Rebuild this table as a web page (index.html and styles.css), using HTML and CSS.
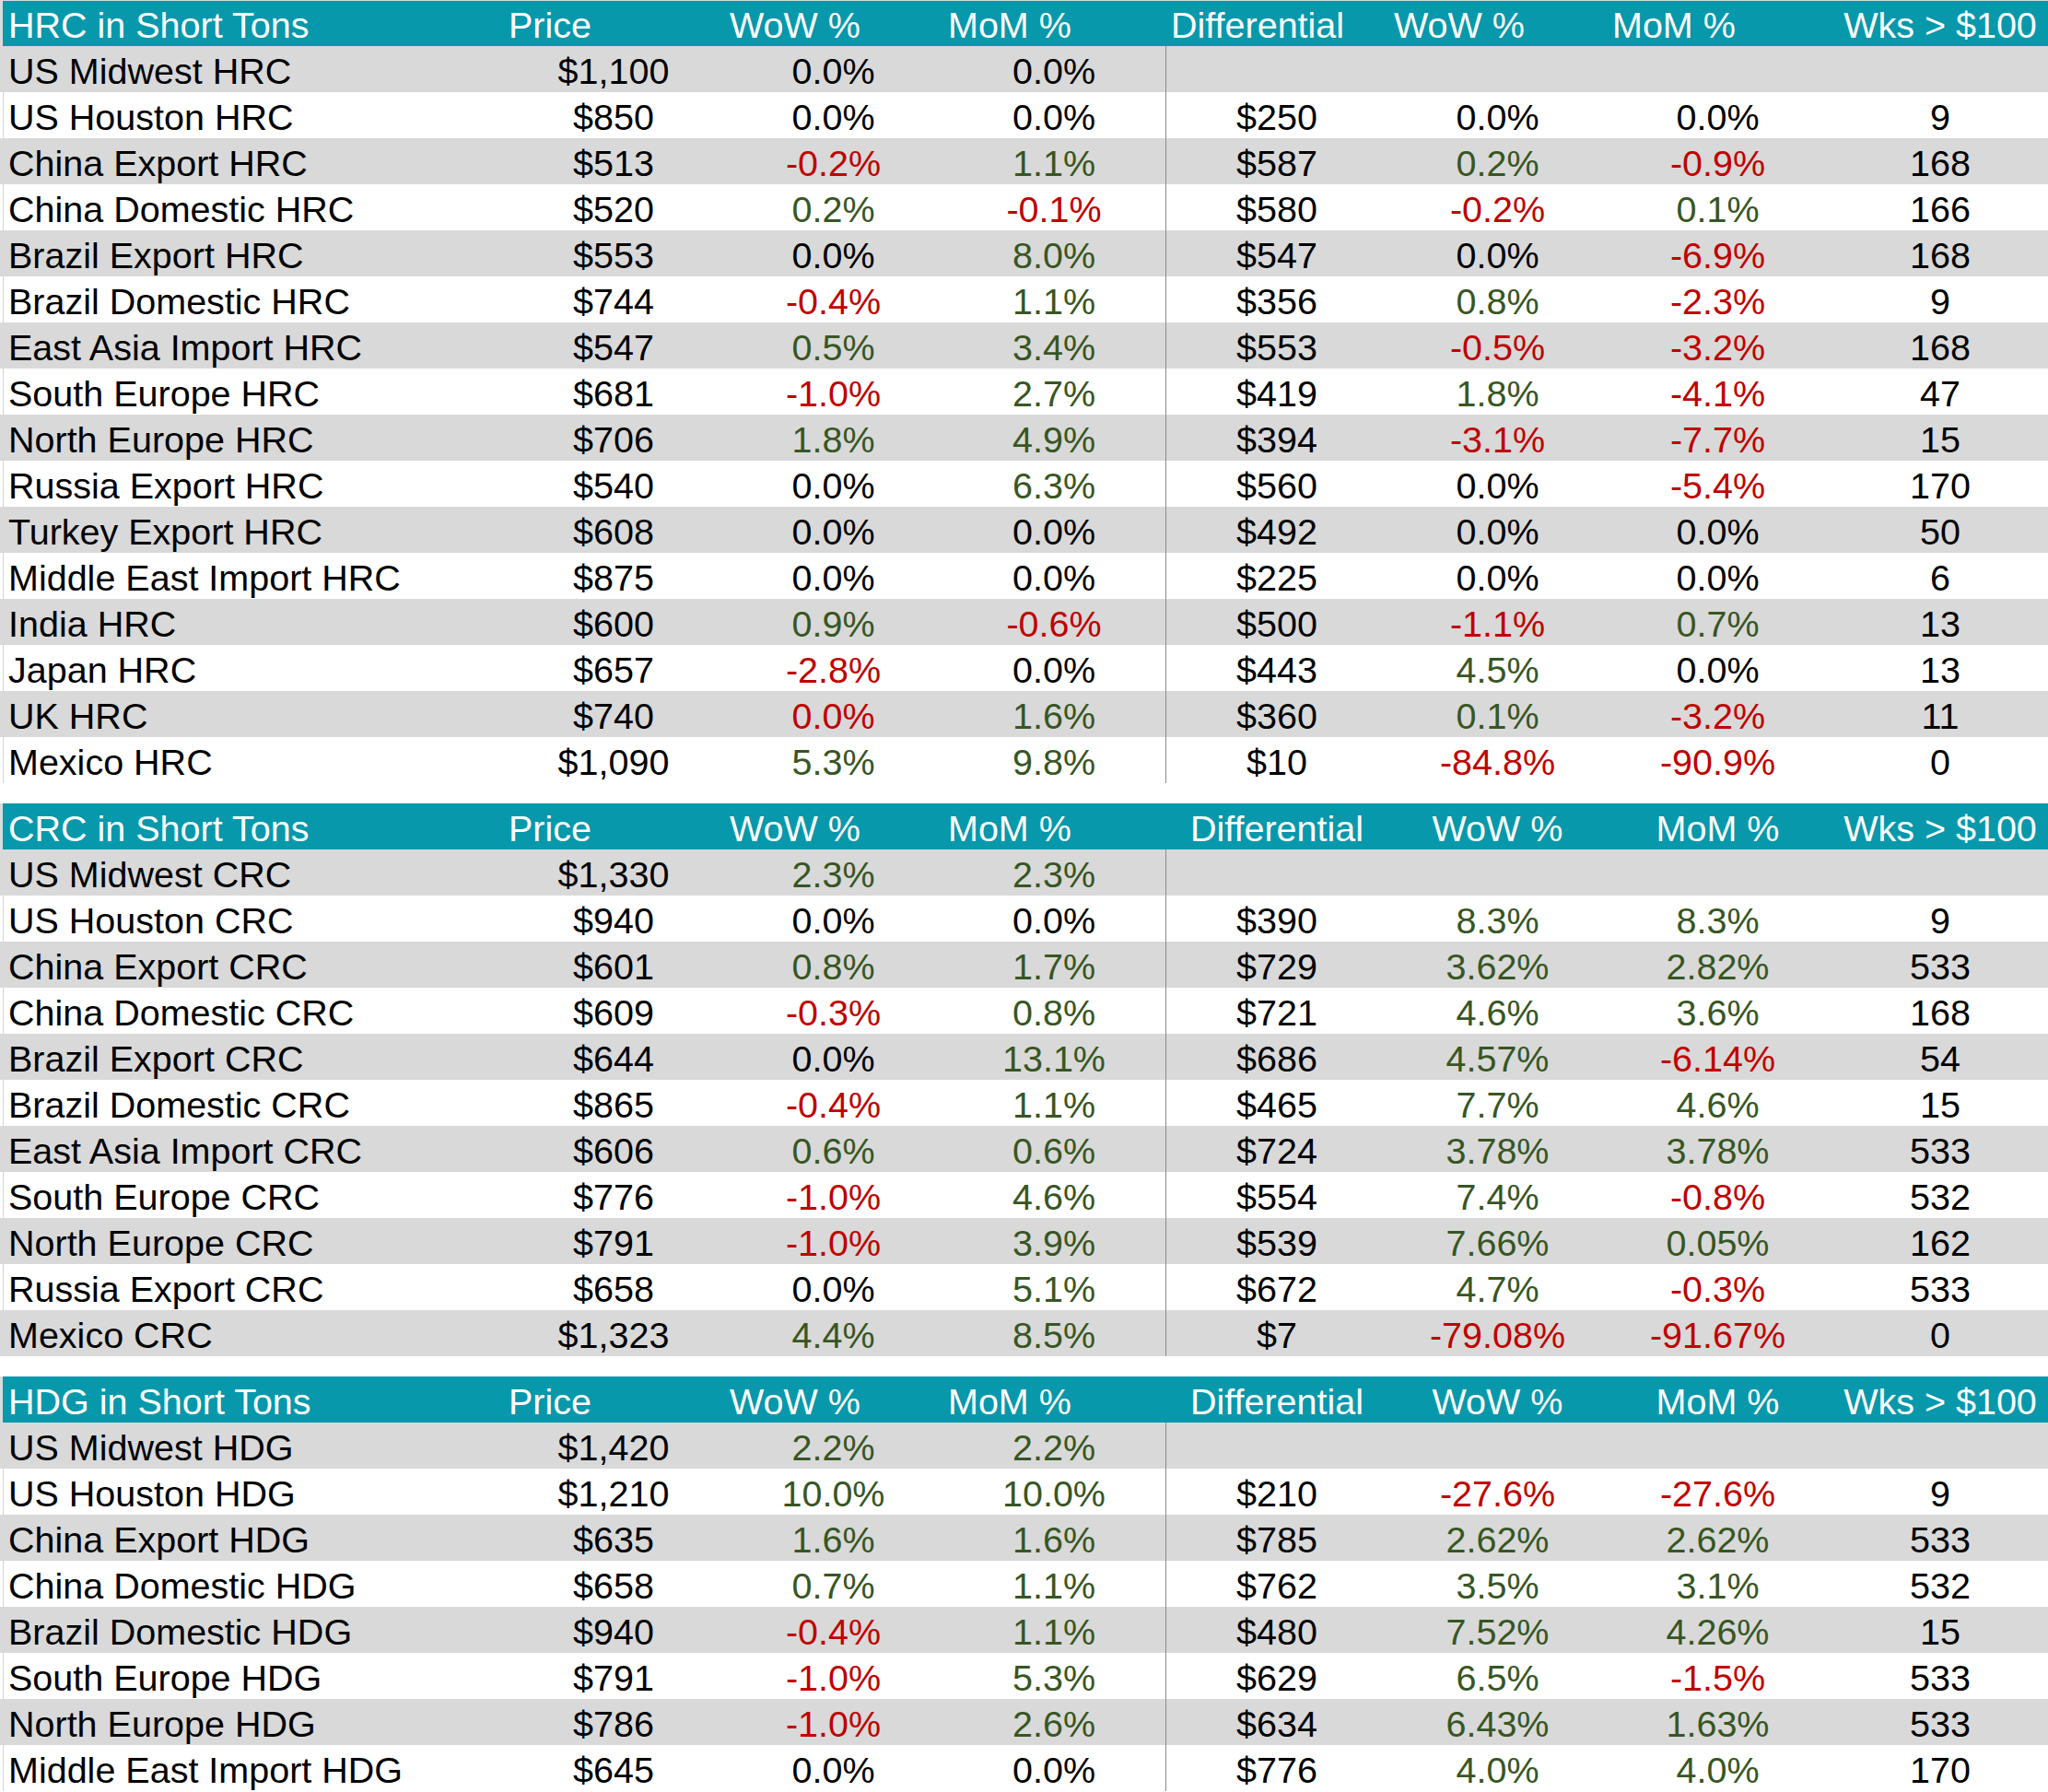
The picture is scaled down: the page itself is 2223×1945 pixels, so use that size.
FILE: index.html
```html
<!DOCTYPE html>
<html lang="en">
<head>
<meta charset="utf-8">
<title>Steel Prices in Short Tons</title>
<link rel="stylesheet" href="styles.css">
</head>
<body>
<div class="sheet">

  <section class="block first">
    <div class="row head">
      <div class="cell name">HRC in Short Tons</div>
      <div class="cell hl">Price</div>
      <div class="cell hl">WoW %</div>
      <div class="cell hl">MoM %</div>
      <div class="cell hl">Differential</div>
      <div class="cell hl">WoW %</div>
      <div class="cell hl">MoM %</div>
      <div class="cell wk">Wks &gt; $100</div>
    </div>
    <div class="row"><div class="cell name">US Midwest HRC</div><div class="cell">$1,100</div><div class="cell">0.0%</div><div class="cell">0.0%</div><div class="cell div"></div><div class="cell"></div><div class="cell"></div><div class="cell wk"></div></div>
    <div class="row"><div class="cell name">US Houston HRC</div><div class="cell">$850</div><div class="cell">0.0%</div><div class="cell">0.0%</div><div class="cell div">$250</div><div class="cell">0.0%</div><div class="cell">0.0%</div><div class="cell wk">9</div></div>
    <div class="row"><div class="cell name">China Export HRC</div><div class="cell">$513</div><div class="cell r">-0.2%</div><div class="cell g">1.1%</div><div class="cell div">$587</div><div class="cell g">0.2%</div><div class="cell r">-0.9%</div><div class="cell wk">168</div></div>
    <div class="row"><div class="cell name">China Domestic HRC</div><div class="cell">$520</div><div class="cell g">0.2%</div><div class="cell r">-0.1%</div><div class="cell div">$580</div><div class="cell r">-0.2%</div><div class="cell g">0.1%</div><div class="cell wk">166</div></div>
    <div class="row"><div class="cell name">Brazil Export HRC</div><div class="cell">$553</div><div class="cell">0.0%</div><div class="cell g">8.0%</div><div class="cell div">$547</div><div class="cell">0.0%</div><div class="cell r">-6.9%</div><div class="cell wk">168</div></div>
    <div class="row"><div class="cell name">Brazil Domestic HRC</div><div class="cell">$744</div><div class="cell r">-0.4%</div><div class="cell g">1.1%</div><div class="cell div">$356</div><div class="cell g">0.8%</div><div class="cell r">-2.3%</div><div class="cell wk">9</div></div>
    <div class="row"><div class="cell name">East Asia Import HRC</div><div class="cell">$547</div><div class="cell g">0.5%</div><div class="cell g">3.4%</div><div class="cell div">$553</div><div class="cell r">-0.5%</div><div class="cell r">-3.2%</div><div class="cell wk">168</div></div>
    <div class="row"><div class="cell name">South Europe HRC</div><div class="cell">$681</div><div class="cell r">-1.0%</div><div class="cell g">2.7%</div><div class="cell div">$419</div><div class="cell g">1.8%</div><div class="cell r">-4.1%</div><div class="cell wk">47</div></div>
    <div class="row"><div class="cell name">North Europe HRC</div><div class="cell">$706</div><div class="cell g">1.8%</div><div class="cell g">4.9%</div><div class="cell div">$394</div><div class="cell r">-3.1%</div><div class="cell r">-7.7%</div><div class="cell wk">15</div></div>
    <div class="row"><div class="cell name">Russia Export HRC</div><div class="cell">$540</div><div class="cell">0.0%</div><div class="cell g">6.3%</div><div class="cell div">$560</div><div class="cell">0.0%</div><div class="cell r">-5.4%</div><div class="cell wk">170</div></div>
    <div class="row"><div class="cell name">Turkey Export HRC</div><div class="cell">$608</div><div class="cell">0.0%</div><div class="cell">0.0%</div><div class="cell div">$492</div><div class="cell">0.0%</div><div class="cell">0.0%</div><div class="cell wk">50</div></div>
    <div class="row"><div class="cell name">Middle East Import HRC</div><div class="cell">$875</div><div class="cell">0.0%</div><div class="cell">0.0%</div><div class="cell div">$225</div><div class="cell">0.0%</div><div class="cell">0.0%</div><div class="cell wk">6</div></div>
    <div class="row"><div class="cell name">India HRC</div><div class="cell">$600</div><div class="cell g">0.9%</div><div class="cell r">-0.6%</div><div class="cell div">$500</div><div class="cell r">-1.1%</div><div class="cell g">0.7%</div><div class="cell wk">13</div></div>
    <div class="row"><div class="cell name">Japan HRC</div><div class="cell">$657</div><div class="cell r">-2.8%</div><div class="cell">0.0%</div><div class="cell div">$443</div><div class="cell g">4.5%</div><div class="cell">0.0%</div><div class="cell wk">13</div></div>
    <div class="row"><div class="cell name">UK HRC</div><div class="cell">$740</div><div class="cell r">0.0%</div><div class="cell g">1.6%</div><div class="cell div">$360</div><div class="cell g">0.1%</div><div class="cell r">-3.2%</div><div class="cell wk">11</div></div>
    <div class="row"><div class="cell name">Mexico HRC</div><div class="cell">$1,090</div><div class="cell g">5.3%</div><div class="cell g">9.8%</div><div class="cell div">$10</div><div class="cell r">-84.8%</div><div class="cell r">-90.9%</div><div class="cell wk">0</div></div>
  </section>

  <section class="block">
    <div class="row head">
      <div class="cell name">CRC in Short Tons</div>
      <div class="cell hl">Price</div>
      <div class="cell hl">WoW %</div>
      <div class="cell hl">MoM %</div>
      <div class="cell">Differential</div>
      <div class="cell">WoW %</div>
      <div class="cell">MoM %</div>
      <div class="cell wk">Wks &gt; $100</div>
    </div>
    <div class="row"><div class="cell name">US Midwest CRC</div><div class="cell">$1,330</div><div class="cell g">2.3%</div><div class="cell g">2.3%</div><div class="cell div"></div><div class="cell"></div><div class="cell"></div><div class="cell wk"></div></div>
    <div class="row"><div class="cell name">US Houston CRC</div><div class="cell">$940</div><div class="cell">0.0%</div><div class="cell">0.0%</div><div class="cell div">$390</div><div class="cell g">8.3%</div><div class="cell g">8.3%</div><div class="cell wk">9</div></div>
    <div class="row"><div class="cell name">China Export CRC</div><div class="cell">$601</div><div class="cell g">0.8%</div><div class="cell g">1.7%</div><div class="cell div">$729</div><div class="cell g">3.62%</div><div class="cell g">2.82%</div><div class="cell wk">533</div></div>
    <div class="row"><div class="cell name">China Domestic CRC</div><div class="cell">$609</div><div class="cell r">-0.3%</div><div class="cell g">0.8%</div><div class="cell div">$721</div><div class="cell g">4.6%</div><div class="cell g">3.6%</div><div class="cell wk">168</div></div>
    <div class="row"><div class="cell name">Brazil Export CRC</div><div class="cell">$644</div><div class="cell">0.0%</div><div class="cell g">13.1%</div><div class="cell div">$686</div><div class="cell g">4.57%</div><div class="cell r">-6.14%</div><div class="cell wk">54</div></div>
    <div class="row"><div class="cell name">Brazil Domestic CRC</div><div class="cell">$865</div><div class="cell r">-0.4%</div><div class="cell g">1.1%</div><div class="cell div">$465</div><div class="cell g">7.7%</div><div class="cell g">4.6%</div><div class="cell wk">15</div></div>
    <div class="row"><div class="cell name">East Asia Import CRC</div><div class="cell">$606</div><div class="cell g">0.6%</div><div class="cell g">0.6%</div><div class="cell div">$724</div><div class="cell g">3.78%</div><div class="cell g">3.78%</div><div class="cell wk">533</div></div>
    <div class="row"><div class="cell name">South Europe CRC</div><div class="cell">$776</div><div class="cell r">-1.0%</div><div class="cell g">4.6%</div><div class="cell div">$554</div><div class="cell g">7.4%</div><div class="cell r">-0.8%</div><div class="cell wk">532</div></div>
    <div class="row"><div class="cell name">North Europe CRC</div><div class="cell">$791</div><div class="cell r">-1.0%</div><div class="cell g">3.9%</div><div class="cell div">$539</div><div class="cell g">7.66%</div><div class="cell g">0.05%</div><div class="cell wk">162</div></div>
    <div class="row"><div class="cell name">Russia Export CRC</div><div class="cell">$658</div><div class="cell">0.0%</div><div class="cell g">5.1%</div><div class="cell div">$672</div><div class="cell g">4.7%</div><div class="cell r">-0.3%</div><div class="cell wk">533</div></div>
    <div class="row"><div class="cell name">Mexico CRC</div><div class="cell">$1,323</div><div class="cell g">4.4%</div><div class="cell g">8.5%</div><div class="cell div">$7</div><div class="cell r">-79.08%</div><div class="cell r">-91.67%</div><div class="cell wk">0</div></div>
  </section>

  <section class="block">
    <div class="row head">
      <div class="cell name">HDG in Short Tons</div>
      <div class="cell hl">Price</div>
      <div class="cell hl">WoW %</div>
      <div class="cell hl">MoM %</div>
      <div class="cell">Differential</div>
      <div class="cell">WoW %</div>
      <div class="cell">MoM %</div>
      <div class="cell wk">Wks &gt; $100</div>
    </div>
    <div class="row"><div class="cell name">US Midwest HDG</div><div class="cell">$1,420</div><div class="cell g">2.2%</div><div class="cell g">2.2%</div><div class="cell div"></div><div class="cell"></div><div class="cell"></div><div class="cell wk"></div></div>
    <div class="row"><div class="cell name">US Houston HDG</div><div class="cell">$1,210</div><div class="cell g">10.0%</div><div class="cell g">10.0%</div><div class="cell div">$210</div><div class="cell r">-27.6%</div><div class="cell r">-27.6%</div><div class="cell wk">9</div></div>
    <div class="row"><div class="cell name">China Export HDG</div><div class="cell">$635</div><div class="cell g">1.6%</div><div class="cell g">1.6%</div><div class="cell div">$785</div><div class="cell g">2.62%</div><div class="cell g">2.62%</div><div class="cell wk">533</div></div>
    <div class="row"><div class="cell name">China Domestic HDG</div><div class="cell">$658</div><div class="cell g">0.7%</div><div class="cell g">1.1%</div><div class="cell div">$762</div><div class="cell g">3.5%</div><div class="cell g">3.1%</div><div class="cell wk">532</div></div>
    <div class="row"><div class="cell name">Brazil Domestic HDG</div><div class="cell">$940</div><div class="cell r">-0.4%</div><div class="cell g">1.1%</div><div class="cell div">$480</div><div class="cell g">7.52%</div><div class="cell g">4.26%</div><div class="cell wk">15</div></div>
    <div class="row"><div class="cell name">South Europe HDG</div><div class="cell">$791</div><div class="cell r">-1.0%</div><div class="cell g">5.3%</div><div class="cell div">$629</div><div class="cell g">6.5%</div><div class="cell r">-1.5%</div><div class="cell wk">533</div></div>
    <div class="row"><div class="cell name">North Europe HDG</div><div class="cell">$786</div><div class="cell r">-1.0%</div><div class="cell g">2.6%</div><div class="cell div">$634</div><div class="cell g">6.43%</div><div class="cell g">1.63%</div><div class="cell wk">533</div></div>
    <div class="row"><div class="cell name">Middle East Import HDG</div><div class="cell">$645</div><div class="cell">0.0%</div><div class="cell">0.0%</div><div class="cell div">$776</div><div class="cell g">4.0%</div><div class="cell g">4.0%</div><div class="cell wk">170</div></div>
  </section>

</div>
</body>
</html>
```

FILE: styles.css
```css
html, body {
  margin: 0;
  padding: 0;
  background: #ffffff;
  overflow: hidden;
}

.sheet {
  width: 2223px;
  font-family: "Liberation Sans", Arial, sans-serif;
  font-size: 39.5px;
  color: #000000;
}

.block + .block {
  margin-top: 22px;
}

.row {
  display: grid;
  grid-template-columns: 546px 240px 237px 242px 242px 237px 241px 238px;
  height: 50px;
  box-shadow: inset 3px 0 0 #ffffff, inset 4px 0 0 #d4d4d4;
}

.row:nth-child(even) {
  background: #d9d9d9;
  box-shadow: none;
}

.row.head {
  background: #0798ab;
  color: #ffffff;
  box-shadow: inset 3px 0 0 #d9dcdc;
}

.first .row.head {
  box-shadow: inset 3px 0 0 #d9dcdc, inset 0 1px 0 #d9dcdc;
}

.cell {
  height: 50px;
  line-height: 54px;
  text-align: center;
  white-space: nowrap;
  overflow: hidden;
}

.cell.name {
  text-align: left;
  padding-left: 9px;
}

.cell.hl {
  text-align: left;
  padding-left: 6px;
}

.cell.wk {
  padding-left: 4px;
}

.cell.div {
  box-shadow: inset 1px 0 0 #8c8c8c;
}

.cell.r {
  color: #c00000;
}

.cell.g {
  color: #375623;
}
```
